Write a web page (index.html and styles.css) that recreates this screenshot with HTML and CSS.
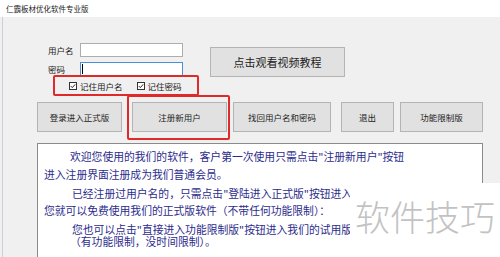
FILE: index.html
```html
<!DOCTYPE html>
<html>
<head>
    <title>仁霸板材优化软件专业版</title>
    <link rel="stylesheet" href="styles.css">
</head>
<body>
    <div class="titlebar">仁霸板材优化软件专业版</div>

    <div class="main">
        <div class="top">
            <div class="form">
                <div class="row">
                    <span class="label">用户名</span>
                    <span class="input"></span>
                </div>
                <div class="row">
                    <span class="label">密码</span>
                    <span class="input focused"><span class="caret"></span></span>
                </div>
                <div class="checks">
                    <span class="check">
                        <svg width="8" height="8" viewBox="0 0 8 8"><rect x="0.5" y="0.5" width="7" height="7" fill="#fff" stroke="#333"/><path d="M1.8 4.1 L3.3 5.6 L6.2 2.4" fill="none" stroke="#222" stroke-width="1"/></svg>
                        记住用户名
                    </span>
                    <span class="check">
                        <svg width="8" height="8" viewBox="0 0 8 8"><rect x="0.5" y="0.5" width="7" height="7" fill="#fff" stroke="#333"/><path d="M1.8 4.1 L3.3 5.6 L6.2 2.4" fill="none" stroke="#222" stroke-width="1"/></svg>
                        记住密码
                    </span>
                </div>
            </div>
            <div class="btn video">点击观看视频教程</div>
        </div>

        <div class="buttons">
            <div class="btn b-login">登录进入正式版</div>
            <div class="btn b-register">注册新用户</div>
            <div class="btn b-find">找回用户名和密码</div>
            <div class="btn b-exit">退出</div>
            <div class="btn b-limit">功能限制版</div>
        </div>

        <div class="info">
            <div class="para p1">
                <div class="indent">欢迎您使用的我们的软件，客户第一次使用只需点击"注册新用户"按钮</div>
                <div>进入注册界面注册成为我们普通会员。</div>
            </div>
            <div class="para p2">
                <div class="indent2">已经注册过用户名的，只需点击"登陆进入正式版"按钮进入</div>
                <div>您就可以免费使用我们的正式版软件（不带任何功能限制）：</div>
            </div>
            <div class="para p3">
                <div class="indent2">您也可以点击"直接进入功能限制版"按钮进入我们的试用版</div>
                <div class="indent">（有功能限制，没时间限制）。</div>
            </div>
        </div>
    </div>

    <!-- annotation marks -->
    <div class="mark mark-checks"></div>
    <div class="mark mark-register"></div>

    <div class="watermark">软件技巧</div>
</body>
</html>
```

FILE: styles.css
```css
body {
    margin: 0;
    width: 500px;
    height: 257px;
    overflow: hidden;
    position: relative;
    background: #f0f0f0;
    font-family: "Noto Sans CJK SC", "Liberation Sans", sans-serif;
    color: #1a1a1a;
}

.titlebar {
    height: 17px;
    line-height: 17px;
    background: #fff;
    padding-left: 6px;
    font-size: 7.5px;
    color: #222;
}

.main {
    margin-left: 2px;
    border-left: 1px solid #c9d0d9;
    height: 240px;
    padding-top: 26px;
    box-sizing: border-box;
}

.top {
    display: flex;
    padding-left: 45px;
}

.form {
    width: 135px;
    flex-shrink: 0;
}

.row {
    display: flex;
    align-items: center;
    height: 14px;
}

.row + .row {
    margin-top: 5px;
}

.label {
    width: 32px;
    font-size: 8.5px;
    line-height: 14px;
}

.input {
    width: 103px;
    height: 14px;
    box-sizing: border-box;
    background: #fff;
    border: 1px solid #adadad;
    position: relative;
}

.input.focused {
    border-color: #4a90d9;
}

.caret {
    position: absolute;
    left: 1px;
    top: 1px;
    width: 1px;
    height: 10px;
    background: #000;
}

.checks {
    display: flex;
    align-items: center;
    height: 12px;
    margin-top: 4px;
    padding-left: 21px;
    font-size: 8.5px;
    white-space: nowrap;
}

.check {
    display: flex;
    align-items: center;
    flex-shrink: 0;
    gap: 3px;
    margin-right: 14px;
}

.btn {
    background: #e1e1e1;
    border: 1px solid #b4b4b4;
    box-sizing: border-box;
    height: 30px;
    display: flex;
    align-items: center;
    justify-content: center;
    font-size: 8.5px;
    color: #222;
    white-space: nowrap;
}

.video {
    width: 135px;
    margin-left: 27px;
    margin-top: 4px;
    font-size: 11px;
}

.buttons {
    display: flex;
    margin-top: 10px;
    padding-left: 34px;
}

.b-login { width: 85px; }
.b-register { width: 95px; margin-left: 10px; }
.b-find { width: 98px; margin-left: 6px; }
.b-exit { width: 53px; margin-left: 10px; }
.b-limit { width: 83px; margin-left: 6px; }

.info {
    margin-top: 11px;
    margin-left: 34px;
    width: 446px;
    height: 114px;
    overflow: hidden;
    box-sizing: border-box;
    background: #fff;
    border: 1px solid #8a8a8a;
    border-bottom: none;
    padding: 3px 0 0 6px;
    font-size: 10.8px;
    color: #2c2c8c;
    white-space: nowrap;
}

.p1 { line-height: 18px; }
.p2 { line-height: 17px; margin-top: 2px; }
.p3 { line-height: 12px; margin-top: 4px; }

.indent { padding-left: 26px; }
.indent2 { padding-left: 28px; }

.mark {
    position: absolute;
    border: 2px solid #de2a2a;
    border-radius: 2px;
    box-sizing: border-box;
}

.mark-checks {
    left: 53px;
    top: 75px;
    width: 146px;
    height: 21px;
}

.mark-register {
    left: 127px;
    top: 95px;
    width: 103px;
    height: 45px;
}

.watermark {
    position: absolute;
    left: 350px;
    top: 183px;
    width: 150px;
    height: 74px;
    background: #fff;
    padding-left: 5px;
    box-sizing: border-box;
    font-size: 35px;
    font-weight: 300;
    line-height: 66px;
    color: #c2c2c2;
    white-space: nowrap;
}
```
